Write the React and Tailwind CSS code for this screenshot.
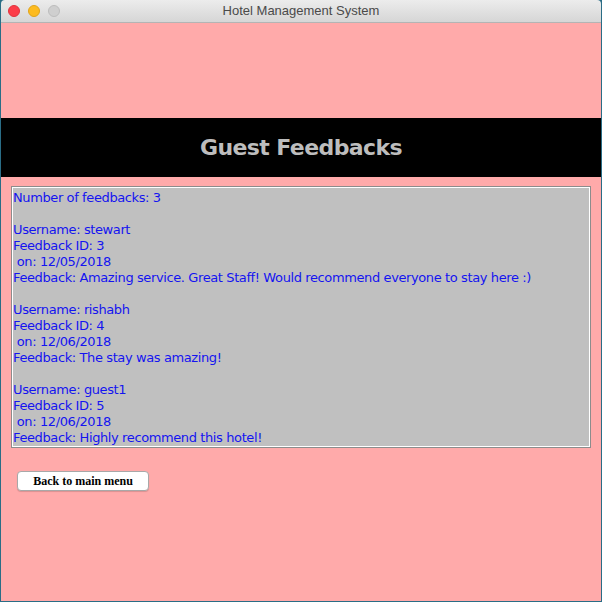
export default function App() {
  const lines = [
    "Number of feedbacks: 3",
    "",
    "Username: stewart",
    "Feedback ID: 3",
    " on: 12/05/2018",
    "Feedback: Amazing service. Great Staff! Would recommend everyone to stay here :)",
    "",
    "Username: rishabh",
    "Feedback ID: 4",
    " on: 12/06/2018",
    "Feedback: The stay was amazing!",
    "",
    "Username: guest1",
    "Feedback ID: 5",
    " on: 12/06/2018",
    "Feedback: Highly recommend this hotel!",
  ];
  return (
    <div className="w-[602px] h-[602px] bg-[#2a6d86] px-[1px] pb-[1px] overflow-hidden">
      <div className="w-[600px] h-[601px] flex flex-col">
        <div className="h-[23px] bg-gradient-to-b from-[#ececec] to-[#d6d6d6] border-b border-[#b4b4b4] relative flex items-center justify-center rounded-t-[4px]">
          <div className="absolute left-[7px] top-[5px] flex gap-[8px]">
            <div className="w-[12px] h-[12px] rounded-full bg-[#fc3d49] border border-[#e0333d]" />
            <div className="w-[12px] h-[12px] rounded-full bg-[#fdbb1f] border border-[#e0a41a]" />
            <div className="w-[12px] h-[12px] rounded-full bg-[#cfcfcf] border border-[#bdbdbd]" />
          </div>
          <span className="text-[13px] text-[#4a4a4a]" style={{ fontFamily: '"Helvetica Neue", "Liberation Sans", Arial, sans-serif' }}>
            Hotel Management System
          </span>
        </div>
        <div className="flex-1 bg-[#ffaaaa] flex flex-col">
          <div className="h-[95px]" />
          <div className="h-[59px] bg-black flex items-center justify-center">
            <span className="text-[22px] font-bold text-[#bdbdbd] tracking-[-0.6px]" style={{ fontFamily: '"DejaVu Sans", Verdana, sans-serif' }}>
              Guest Feedbacks
            </span>
          </div>
          <div className="pt-[9px] px-[10px]">
            <div className="h-[262px] border border-[#8c8c8c]">
              <div className="h-full border border-white bg-[#c0c0c0] pt-[2px]">
                {lines.map((l, i) => (
                  <div key={i} className="h-[16px] leading-[16px] text-[13px] text-[#1414f0] whitespace-pre" style={{ fontFamily: '"DejaVu Sans", "Lucida Grande", sans-serif', letterSpacing: '-0.39px' }}>
                    {l}
                  </div>
                ))}
              </div>
            </div>
          </div>
          <div className="pt-[23px] pl-[16px]">
            <div className="w-[132px] h-[20px] bg-white rounded-[4px] border border-[#a8a8a8] shadow-[0_1px_1px_rgba(0,0,0,0.15)] flex items-center justify-center">
              <span className="text-[12px] font-bold text-black" style={{ fontFamily: '"Liberation Serif", "Times New Roman", serif' }}>
                Back to main menu
              </span>
            </div>
          </div>
        </div>
      </div>
    </div>
  );
}
